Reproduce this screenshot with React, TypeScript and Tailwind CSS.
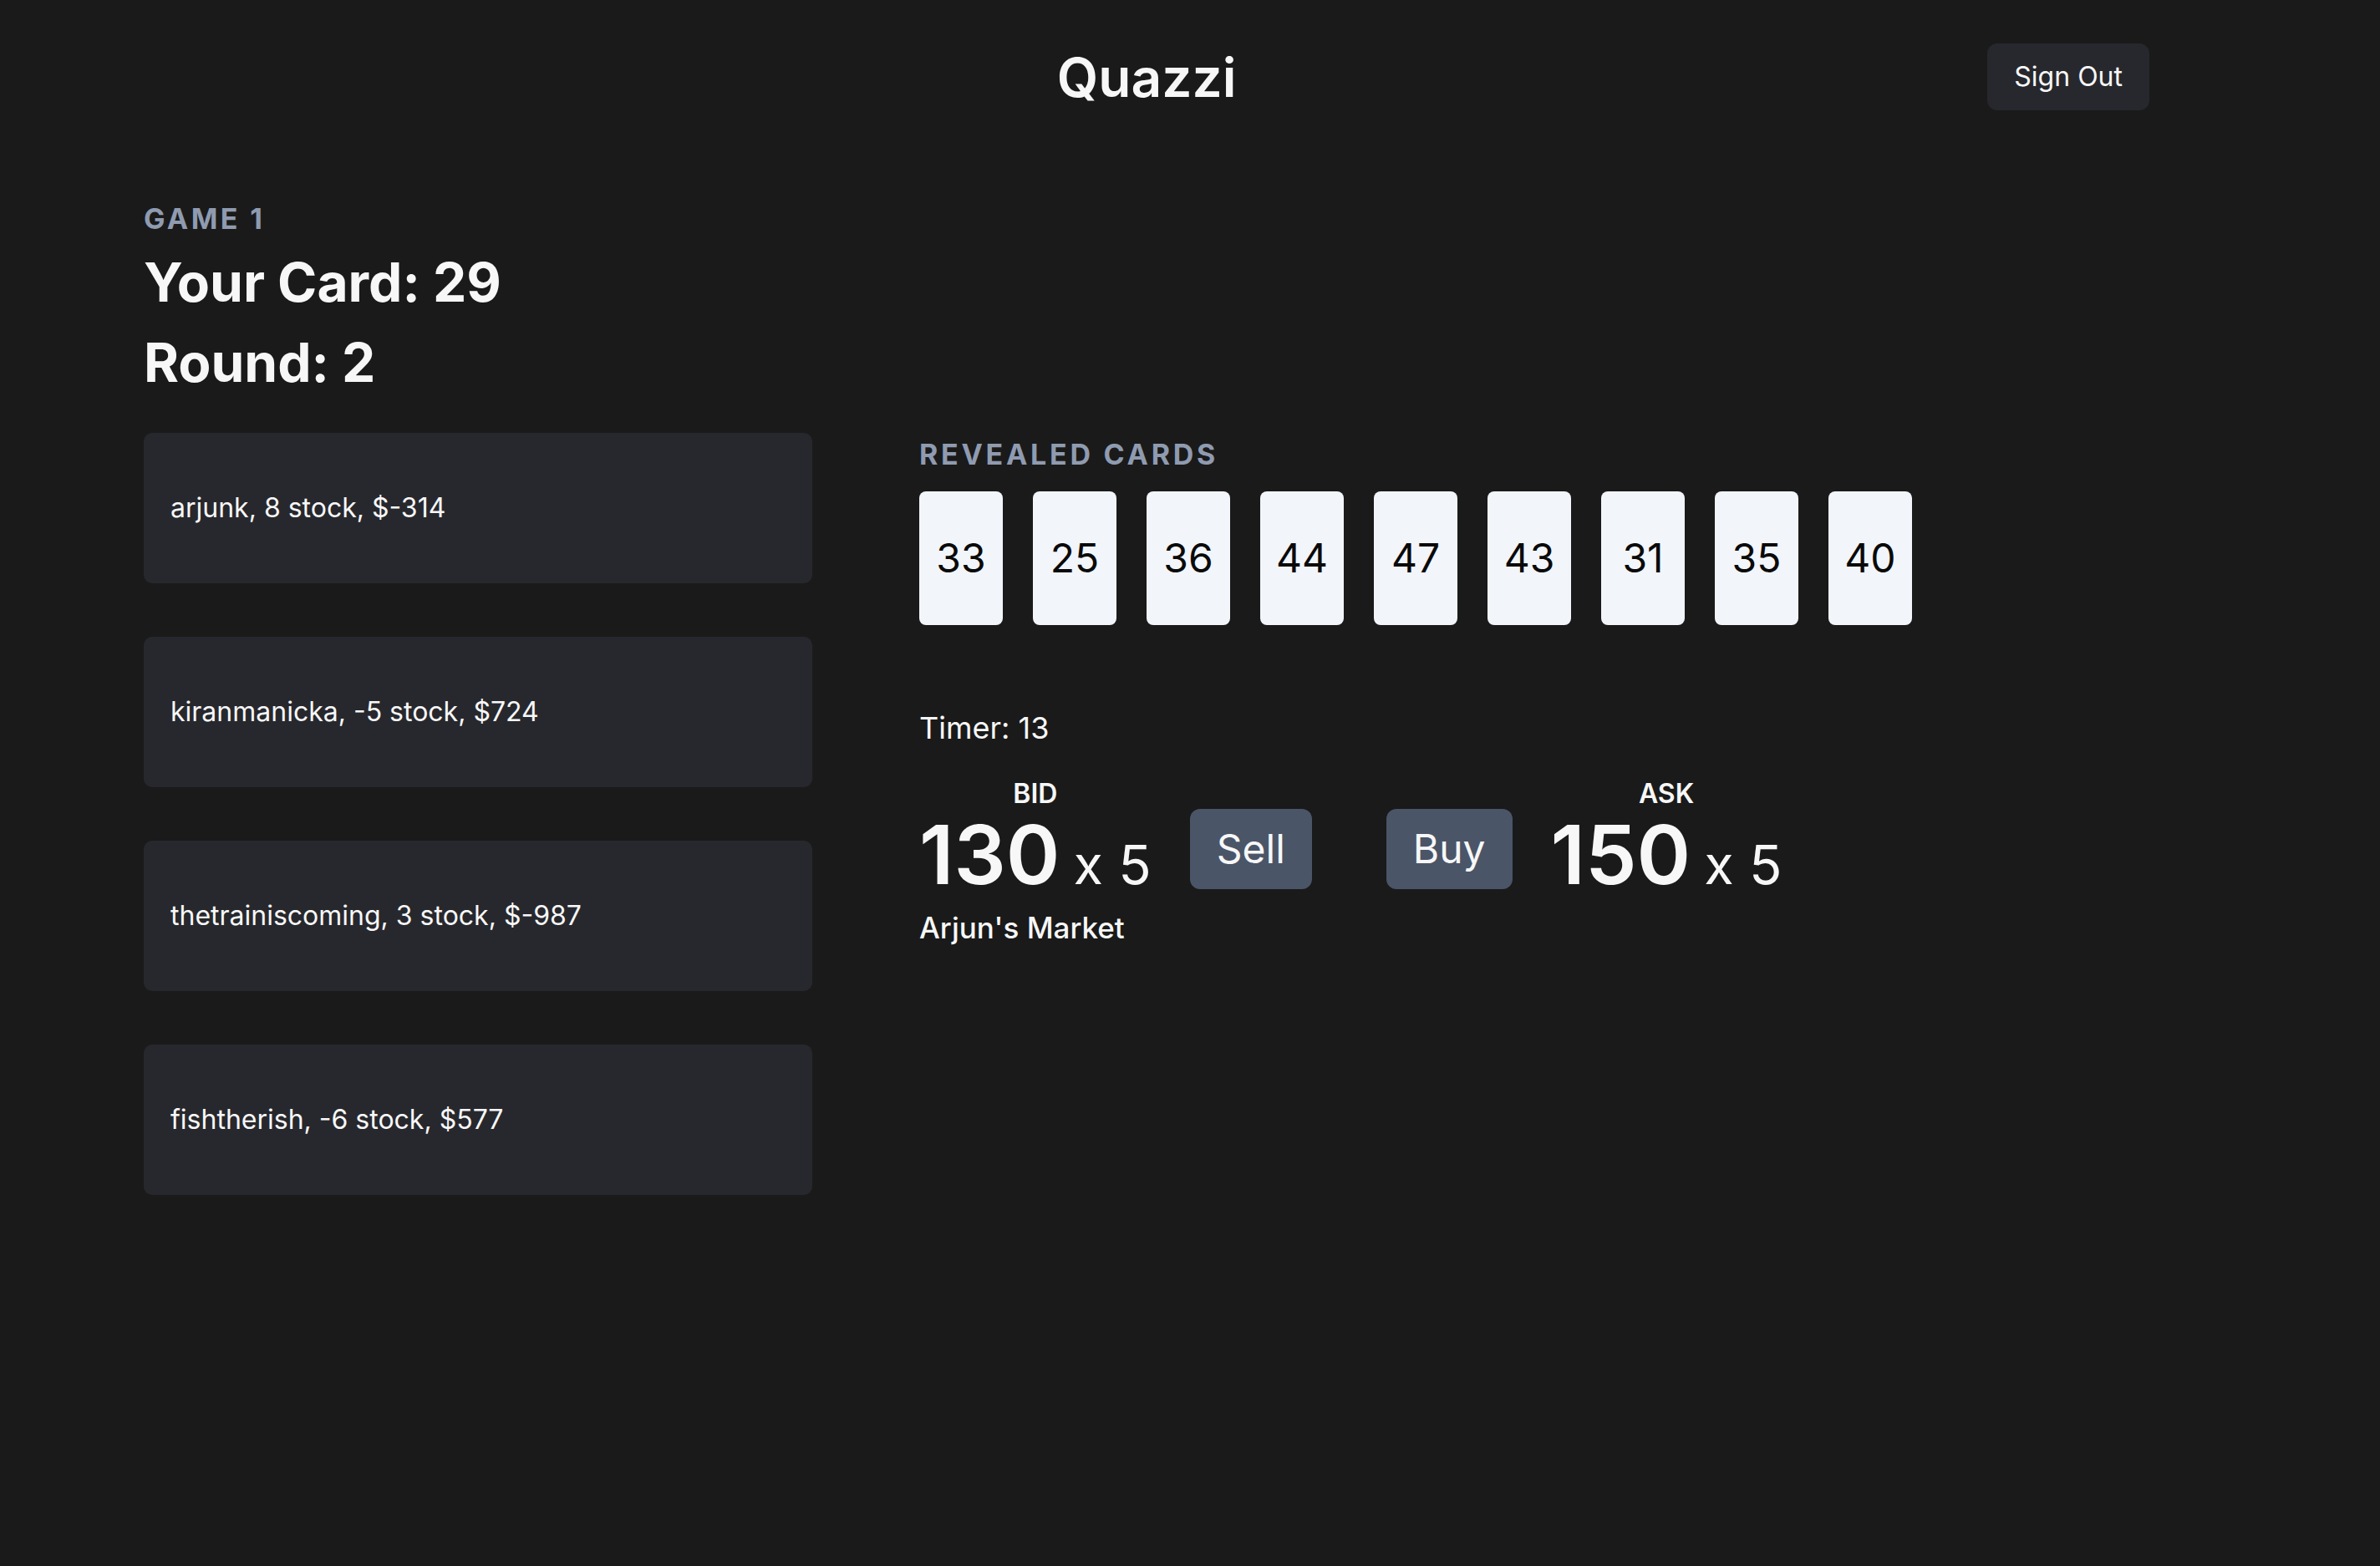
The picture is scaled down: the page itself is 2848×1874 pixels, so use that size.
const players = [
  'arjunk, 8 stock, $-314',
  'kiranmanicka, -5 stock, $724',
  'thetrainiscoming, 3 stock, $-987',
  'fishtherish, -6 stock, $577',
];

const revealed = [33, 25, 36, 44, 47, 43, 31, 35, 40];

function Quote({ label, price, size }: { label: string; price: number; size: number }) {
  return (
    <div className="flex flex-col items-center">
      <div className="text-[32px] leading-[28px] font-semibold">{label}</div>
      <div className="text-[98px] leading-[118px] font-semibold whitespace-nowrap">
        {price}
        <span className="text-[65px] leading-none font-normal ml-[16px]">x {size}</span>
      </div>
    </div>
  );
}

export default function App() {
  return (
    <div
      className="min-h-screen bg-[#1a1a1a] text-[#f7f7f7]"
      style={{ fontFamily: 'Inter, "Noto Sans", sans-serif' }}
    >
      <div className="ml-[172px] w-[2400px]">
        {/* header */}
        <header className="flex justify-between items-center h-[184px]">
          <div className="w-[194px]" />
          <h1 className="text-[64px] leading-[77px] font-semibold">Quazzi</h1>
          <button className="h-[80px] px-[32px] rounded-[12px] bg-[#27282d] text-[32px]">
            Sign Out
          </button>
        </header>

        <div className="pt-[58px]">
          <div className="text-[34px] leading-[40px] font-bold tracking-[0.1em] text-[#8f9bb0]">
            GAME 1
          </div>
          <div className="mt-[8px] text-[64px] leading-[96px] font-bold">Your Card: 29</div>
          <div className="text-[64px] leading-[96px] font-bold">Round: 2</div>
        </div>

        <div className="flex gap-[128px] mt-[36px]">
          {/* players */}
          <div className="w-[800px] flex flex-col gap-[64px]">
            {players.map((p) => (
              <div
                key={p}
                className="h-[180px] rounded-[10px] bg-[#27282d] px-[32px] flex items-center text-[32px]"
              >
                {p}
              </div>
            ))}
          </div>

          {/* market */}
          <div className="pt-[6px]">
            <div className="text-[34px] leading-[40px] font-bold tracking-[0.11em] text-[#8f9bb0]">
              REVEALED CARDS
            </div>
            <div className="mt-[24px] flex gap-[36px]">
              {revealed.map((c) => (
                <div
                  key={c}
                  className="w-[100px] h-[160px] rounded-[8px] bg-[#f2f5fa] text-[#0a0a0a] text-[48px] flex items-center justify-center"
                >
                  {c}
                </div>
              ))}
            </div>

            <div className="mt-[96px] text-[36px] leading-[54px]">Timer: 13</div>

            <div className="mt-[38px] flex items-start gap-[46px]">
              <Quote label="BID" price={130} size={5} />
              <button className="mt-[32px] h-[96px] px-[32px] rounded-[12px] bg-[#4a5568] text-[48px]">
                Sell
              </button>
              <button className="mt-[32px] ml-[43px] h-[96px] px-[32px] rounded-[12px] bg-[#4a5568] text-[48px]">
                Buy
              </button>
              <Quote label="ASK" price={150} size={5} />
            </div>

            <div className="mt-[1px] text-[35px] leading-[54px] font-medium">Arjun's Market</div>
          </div>
        </div>
      </div>
    </div>
  );
}
